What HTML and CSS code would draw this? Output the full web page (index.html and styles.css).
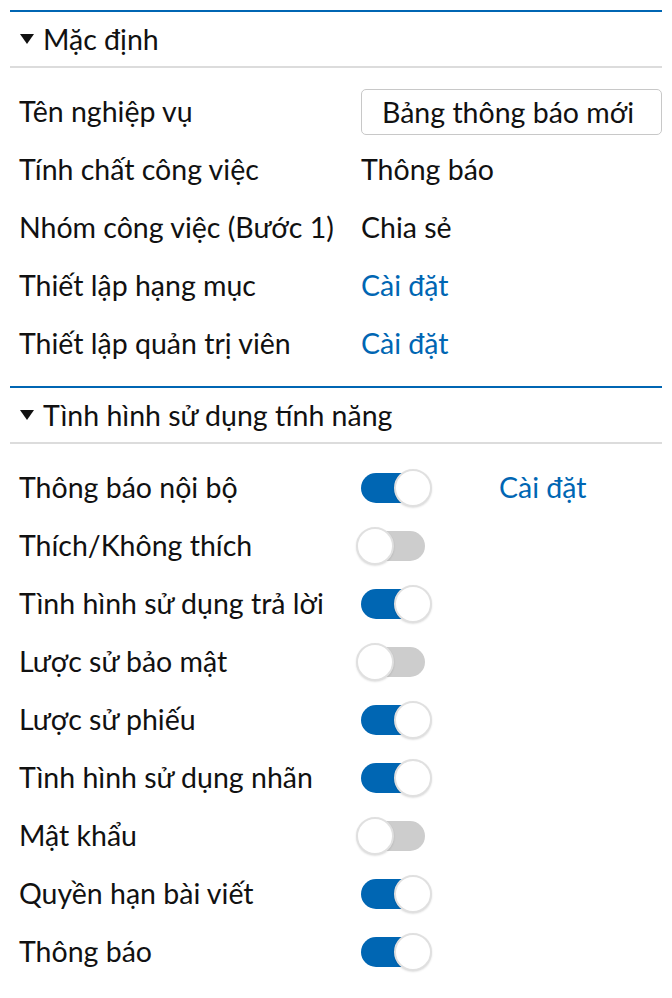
FILE: index.html
```html
<!DOCTYPE html>
<html lang="vi">
<head>
<meta charset="utf-8">
<link rel="stylesheet" href="styles.css">
</head>
<body>
<div class="panel">
  <section class="section">
    <div class="sec-head"><span class="tri"></span><span>Mặc định</span></div>
    <div class="rows">
      <div class="row"><span class="label">Tên nghiệp vụ</span><span class="value"><span class="input">Bảng thông báo mới</span></span></div>
      <div class="row"><span class="label">Tính chất công việc</span><span class="value">Thông báo</span></div>
      <div class="row"><span class="label">Nhóm công việc (Bước 1)</span><span class="value">Chia sẻ</span></div>
      <div class="row"><span class="label">Thiết lập hạng mục</span><span class="value link">Cài đặt</span></div>
      <div class="row"><span class="label">Thiết lập quản trị viên</span><span class="value link">Cài đặt</span></div>
    </div>
  </section>
  <section class="section second">
    <div class="sec-head"><span class="tri"></span><span>Tình hình sử dụng tính năng</span></div>
    <div class="rows">
      <div class="row"><span class="label">Thông báo nội bộ</span><span class="value"><span class="switch on"><span class="knob"></span></span><span class="link extra">Cài đặt</span></span></div>
      <div class="row"><span class="label">Thích/Không thích</span><span class="value"><span class="switch"><span class="knob"></span></span></span></div>
      <div class="row"><span class="label">Tình hình sử dụng trả lời</span><span class="value"><span class="switch on"><span class="knob"></span></span></span></div>
      <div class="row"><span class="label">Lược sử bảo mật</span><span class="value"><span class="switch"><span class="knob"></span></span></span></div>
      <div class="row"><span class="label">Lược sử phiếu</span><span class="value"><span class="switch on"><span class="knob"></span></span></span></div>
      <div class="row"><span class="label">Tình hình sử dụng nhãn</span><span class="value"><span class="switch on"><span class="knob"></span></span></span></div>
      <div class="row"><span class="label">Mật khẩu</span><span class="value"><span class="switch"><span class="knob"></span></span></span></div>
      <div class="row"><span class="label">Quyền hạn bài viết</span><span class="value"><span class="switch on"><span class="knob"></span></span></span></div>
      <div class="row"><span class="label">Thông báo</span><span class="value"><span class="switch on"><span class="knob"></span></span></span></div>
    </div>
  </section>
</div>
</body>
</html>
```
FILE: styles.css
```css
html, body { margin: 0; padding: 0; background: #fff; }
body {
  font-family: "Lato", "Noto Sans", sans-serif;
  font-size: 28.5px;
  line-height: 1.2;
  color: #111;
}
.panel { padding: 10px 10px 0 10px; }
.section { border-top: 2px solid #0066b3; }
.section.second { margin-top: 13px; }
.sec-head {
  height: 54px;
  display: flex;
  align-items: center;
  border-bottom: 2px solid #dcdcdc;
  padding-left: 10px;
}
.sec-head .title { position: relative; top: -1px; }
.tri {
  width: 0; height: 0;
  border-left: 7px solid transparent;
  border-right: 7px solid transparent;
  border-top: 10px solid #111;
  margin-right: 9px;
}
.rows { padding-top: 15px; }
.row {
  height: 58px;
  display: grid;
  grid-template-columns: 342px 1fr;
  align-items: center;
  padding-left: 9px;
}
.label, .value { margin-top: -2px; }
.value { display: flex; align-items: center; }
.link { color: #0066b3; }
.input {
  box-sizing: border-box;
  width: 301px;
  height: 46px;
  margin-top: 2px;
  border: 1px solid #c8c8c8;
  border-radius: 5px;
  padding-left: 20px;
  display: flex;
  align-items: center;
}
.switch {
  position: relative;
  width: 64px;
  height: 30px;
  margin-top: 2px;
  border-radius: 15px;
  background: #cdcdcd;
}
.switch.on { background: #0066b3; }
.knob {
  position: absolute;
  top: -4px;
  left: -5px;
  width: 34px;
  height: 34px;
  border-radius: 50%;
  background: #fff;
  border: 2px solid #e0e0e0;
  box-shadow: 0 1px 2px rgba(0,0,0,0.12);
}
.switch.on .knob { left: 33px; }
.extra { margin-left: 74px; }
```
